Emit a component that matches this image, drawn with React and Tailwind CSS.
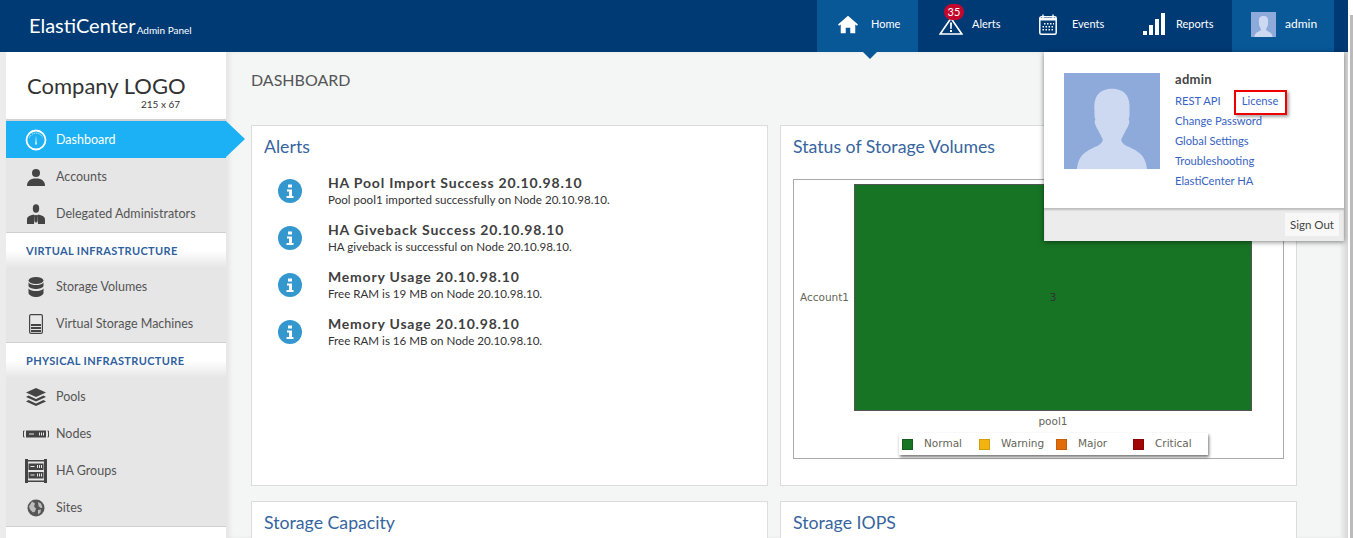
import React from 'react';

const FONT = "font-['Lato','Noto_Sans',sans-serif]";

function DashIcon() {
  return (
    <svg width="22" height="22" viewBox="0 0 22 22" fill="none">
      <circle cx="11" cy="11" r="9.5" stroke="#fff" strokeWidth="1.8" />
      <path d="M4.5 8.5a7 7 0 0 1 13 0" stroke="#fff" strokeWidth="1" strokeDasharray="1 1" />
      <path d="M11 6.5l.8 9h-1.6z" fill="#fff" />
    </svg>
  );
}

function UserIcon() {
  return (
    <svg width="20" height="18" viewBox="0 0 20 18" fill="#444">
      <circle cx="10" cy="5" r="4" />
      <path d="M1 18c0-5 3-7.500 9-7.500s9 2.500 9 7.500z" />
    </svg>
  );
}

function SuitIcon() {
  return (
    <svg width="18" height="20" viewBox="0 0 18 20" fill="#444">
      <ellipse cx="9" cy="4.500" rx="3.200" ry="4.200" />
      <path d="M0 20v-4.500c0-3 3-4 6.500-5l1.500 1-1 8.500zM18 20v-4.500c0-3-3-4-6.500-5l-1.500 1 1 8.500z" />
      <path d="M8.200 11h1.600l.7 6-1.500 2-1.500-2z" />
    </svg>
  );
}

function DbIcon() {
  return (
    <svg width="16" height="20" viewBox="0 0 16 20" fill="#444">
      <ellipse cx="8" cy="3.500" rx="7.500" ry="3.500" />
      <path d="M.5 5.500C2 7.500 5 8 8 8s6-.5 7.500-2.500V9C15 11 11 12 8 12S1 11 .5 9z" />
      <path d="M.5 11.500C2 13.500 5 14 8 14s6-.5 7.500-2.500V16c-.5 2.500-4.500 4-7.500 4S1 18.500.5 16z" />
    </svg>
  );
}

function VsmIcon() {
  return (
    <svg width="14" height="20" viewBox="0 0 14 20">
      <rect x=".6" y=".6" width="12.800" height="18.800" rx="1.500" fill="#e8e8e8" stroke="#444" strokeWidth="1.200" />
      <path d="M2 10h10v2H2zM2 13h10v2H2zM2 16h10v2H2z" fill="#444" />
    </svg>
  );
}

function LayersIcon() {
  return (
    <svg width="22" height="18" viewBox="0 0 22 18" fill="#444">
      <path d="M11 0l10 4.500-10 4.500L1 4.500z" />
      <path d="M3.500 7.500L11 11l7.500-3.500L21 9l-10 4.500L1 9z" />
      <path d="M3.500 12L11 15.500 18.500 12 21 13.500 11 18 1 13.500z" />
    </svg>
  );
}

function NodeIcon() {
  return (
    <svg width="26" height="8" viewBox="0 0 26 8">
      <path d="M1.500 1H.5v6h1M24.500 1h1v6h-1" fill="none" stroke="#444" />
      <rect x="3" y="0.500" width="20" height="7" fill="#444" />
      <path d="M6 3.500h5v1H6zM16 2.500h1v3h-1zM18 2.500h1v3h-1zM20 2.500h1v3h-1z" fill="#e8e8e8" />
    </svg>
  );
}

function RackIcon() {
  return (
    <svg width="22" height="24" viewBox="0 0 22 24">
      <path d="M0 0h3v24H0zM19 0h3v24h-3z" fill="#444" />
      <path d="M3 1h16v1.500H3zM3 21.500h16V23H3z" fill="#444" />
      <rect x="3.500" y="4.500" width="15" height="6.500" fill="#444" />
      <rect x="3.500" y="13" width="15" height="6.500" fill="#444" />
      <path d="M5.500 7h4v1h-4zM12 6h1v3h-1zM14 6h1v3h-1zM16 6h1v3h-1zM5.500 15.500h4v1h-4zM12 14.500h1v3h-1zM14 14.500h1v3h-1zM16 14.500h1v3h-1z" fill="#e8e8e8" />
    </svg>
  );
}

function GlobeIcon() {
  return (
    <svg width="18" height="18" viewBox="0 0 18 18">
      <circle cx="9" cy="9" r="8.500" fill="#555" />
      <path d="M5 2.500l3 2-1 3 2 2-1 3-2 1-3-3-1-3zM11 3l3 1.500 1.500 4-2 .5-2-2zM11 11l3-.5-.5 3-2.500 2z" fill="#bdbdbd" />
    </svg>
  );
}

function HomeIcon() {
  return (
    <svg width="20" height="19" viewBox="0 0 22 19" fill="#fff">
      <path d="M11 0L0 9.500l1.300 1.500L3 9.600V19h5.500v-6h5v6H19V9.600l1.700 1.400L22 9.500z" />
    </svg>
  );
}

function AlertIcon() {
  return (
    <svg width="24" height="18" viewBox="0 0 24 18" fill="none" className="mt-[3px]">
      <path d="M12 1.200L1.200 17h21.600z" stroke="#fff" strokeWidth="1.600" />
      <path d="M11 5.500h2l-.3 6.500h-1.400zM11 13h2v2h-2z" fill="#fff" />
    </svg>
  );
}

function CalendarIcon() {
  return (
    <svg width="18" height="21" viewBox="0 0 18 21" fill="none">
      <rect x=".8" y="2.800" width="16.400" height="17.400" rx="1.500" stroke="#fff" strokeWidth="1.500" />
      <path d="M4 0.500v4M14 0.500v4" stroke="#fff" strokeWidth="1.400" />
      <path d="M1 4h16v2.500H1z" fill="#fff" />
      <path d="M5 9h1.500v1.500H5zM8 9h1.500v1.500H8zM11 9h1.500v1.500H11zM14 9h1v1.500h-1zM3.500 12H5v1.500H3.500zM6.500 12H8v1.500H6.500zM9.500 12H11v1.500H9.500zM12.500 12H14v1.500h-1.500zM3.500 15H5v1.500H3.500zM6.500 15H8v1.500H6.500zM9.500 15H11v1.500H9.500zM12.500 15H14v1.500h-1.500z" fill="#fff" />
    </svg>
  );
}

function BarsIcon() {
  return (
    <svg width="22" height="22" viewBox="0 0 22 22" fill="#fff">
      <rect x="0" y="18" width="4" height="4" />
      <rect x="6" y="12" width="4" height="10" />
      <rect x="12" y="6" width="4" height="16" />
      <rect x="18" y="0" width="4" height="22" />
    </svg>
  );
}

function Avatar({ size }) {
  return (
    <svg width={size} height={size} viewBox="0 0 104 104" className="shrink-0 block">
      <rect width="104" height="104" fill="#8eaadb" />
      <path d="M52 17c-15 0-20 10-19 23 0 5 0 8 1 10l-1 3c1 3 2 6 4 9 2 4 4 8 5 10 0 3-3 6-8 8-10 5-18 8-20 24h76c-2-16-10-19-20-24-5-2-8-5-8-8 1-2 3-6 5-10 2-3 3-6 4-9l-1-3c1-2 1-5 1-10 1-13-4-23-19-23z" fill="#ccd9f0" />
    </svg>
  );
}

function InfoDot() {
  return (
    <svg width="24" height="24" viewBox="0 0 24 24" className="shrink-0">
      <circle cx="12" cy="12" r="12" fill="#3498cf" />
      <path d="M10 5.500h4v3h-4zM9 10.500h5v6.500h1.500v2h-7v-2H11v-4.500H9z" fill="#fff" />
    </svg>
  );
}

function NavTab({ icon, label, active, badge, className, textClass }) {
  return (
    <div className={`relative h-[52px] pb-[4px] flex items-center ${className} ${active ? 'bg-[#085797]' : ''}`}>
      {icon}
      <span className={`text-[11px] text-white ${textClass}`}>{label}</span>
      {badge && (
        <span className="absolute left-[26px] top-[4px] w-[20px] h-[16px] rounded-full bg-[#c4062c] text-white text-[11px] leading-[16px] text-center">
          {badge}
        </span>
      )}
      {active && (
        <span className="absolute left-[45px] top-[51px] w-0 h-0 border-x-[8px] border-x-transparent border-t-[8px] border-t-[#085797] z-10" />
      )}
    </div>
  );
}

function Header() {
  return (
    <header className="h-[52px] w-[1348px] shrink-0 bg-[#003a75] flex items-center">
      <div className="pl-[29px] pb-[2px] flex items-end text-white">
        <span className="text-[20px] leading-[24px]">ElastiCenter</span>
        <span className="text-[10px] leading-[14px] ml-px">Admin Panel</span>
      </div>
      <nav className="ml-auto flex items-center mr-[14px]">
        <NavTab active icon={<HomeIcon />} label="Home" className="w-[101px] pl-[21px]" textClass="ml-[13px]" />
        <NavTab icon={<AlertIcon />} label="Alerts" badge="35" className="w-[101px] pl-[21px]" textClass="ml-[9px]" />
        <NavTab icon={<CalendarIcon />} label="Events" className="w-[105px] pl-[20px]" textClass="ml-[15px]" />
        <NavTab icon={<BarsIcon />} label="Reports" className="w-[108px] pl-[19px]" textClass="ml-[11px]" />
        <div className="h-[52px] w-[102px] pb-[4px] bg-[#085797] flex items-center pl-[19px]">
          <Avatar size={25} />
          <span className="text-[12px] text-white ml-[9px]">admin</span>
        </div>
      </nav>
    </header>
  );
}

function SideItem({ icon, label, active }) {
  if (active) {
    return (
      <div className="relative h-[37px] bg-[#1cb1f5] flex items-center text-white">
        <span className="w-[50px] flex justify-center pl-[14px] pr-[4px]">{icon}</span>
        <span className="text-[12.500px] mt-[2px]">{label}</span>
        <span className="absolute left-[220px] top-0 w-0 h-0 border-y-[18.500px] border-y-transparent border-l-[19px] border-l-[#1cb1f5] z-10" />
      </div>
    );
  }
  return (
    <div className="h-[37px] flex items-center text-[#555]">
      <span className="w-[50px] flex justify-center pl-[14px] pr-[4px]">{icon}</span>
      <span className="text-[12.500px] mt-[2px]">{label}</span>
    </div>
  );
}

function SideHeading({ label }) {
  return (
    <div className="h-[36px] border-t border-[#cfcfcf] bg-gradient-to-b from-white from-50% to-[#e6e6e6] flex items-center pl-[20px]">
      <span className="text-[11px] font-bold tracking-[0.35px] text-[#2f5f9e] mt-[2px]">{label}</span>
    </div>
  );
}

function Sidebar() {
  return (
    <aside className="w-[220px] ml-[6px] shrink-0 bg-[#e6e6e6]">
      <div className="h-[69px] bg-white border-b-2 border-[#d2d2d2] flex flex-col pl-[21px] pt-[21px]">
        <div className="text-[22px] leading-[26px] text-[#333]">Company LOGO</div>
        <div className="text-[10px] leading-[10px] text-[#333] pl-[114px]">215 x 67</div>
      </div>
      <SideItem active icon={<DashIcon />} label="Dashboard" />
      <SideItem icon={<UserIcon />} label="Accounts" />
      <SideItem icon={<SuitIcon />} label="Delegated Administrators" />
      <SideHeading label="VIRTUAL INFRASTRUCTURE" />
      <SideItem icon={<DbIcon />} label="Storage Volumes" />
      <SideItem icon={<VsmIcon />} label="Virtual Storage Machines" />
      <SideHeading label="PHYSICAL INFRASTRUCTURE" />
      <SideItem icon={<LayersIcon />} label="Pools" />
      <SideItem icon={<NodeIcon />} label="Nodes" />
      <SideItem icon={<RackIcon />} label="HA Groups" />
      <SideItem icon={<GlobeIcon />} label="Sites" />
      <div className="h-[20px] bg-white border-t border-[#cfcfcf]" />
    </aside>
  );
}

const alerts = [
  ['HA Pool Import Success 20.10.98.10', 'Pool pool1 imported successfully on Node 20.10.98.10.'],
  ['HA Giveback Success 20.10.98.10', 'HA giveback is successful on Node 20.10.98.10.'],
  ['Memory Usage 20.10.98.10', 'Free RAM is 19 MB on Node 20.10.98.10.'],
  ['Memory Usage 20.10.98.10', 'Free RAM is 16 MB on Node 20.10.98.10.'],
];

function Card({ title, className, children }) {
  return (
    <section className={`bg-white border border-[#dcdcdc] ${className}`}>
      <h3 className="pl-[12px] pt-[10px] text-[17.700px] leading-[22px] text-[#37659e]">{title}</h3>
      {children}
    </section>
  );
}

function AlertsList() {
  return (
    <div className="pl-[26px] pt-[9px]">
      {alerts.map((a, i) => (
        <div key={i} className="h-[47px] flex items-center">
          <InfoDot />
          <div className="ml-[26px]">
            <div className="text-[14px] leading-[18px] font-bold tracking-[0.8px] text-[#404040]">{a[0]}</div>
            <div className="text-[11.600px] leading-[14px] mt-px text-[#333]">{a[1]}</div>
          </div>
        </div>
      ))}
    </div>
  );
}

const legend = [
  ['Normal', 'bg-[#177425]', 'border-[#125c1d]', 'w-[77px]'],
  ['Warning', 'bg-[#f2b40e]', 'border-[#d39c0a]', 'w-[77px]'],
  ['Major', 'bg-[#e06c0a]', 'border-[#c55e08]', 'w-[77px]'],
  ['Critical', 'bg-[#a30606]', 'border-[#8a0505]', 'w-[72px]'],
];

function StatusChart() {
  return (
    <div className="mx-[12px] mt-[21px] h-[280px] border border-[#aaa] flex flex-col font-['DejaVu_Sans',sans-serif] text-[10.500px] text-[#666659]">
      <div className="flex mt-[4px] h-[227px]">
        <div className="w-[60px] flex items-center justify-end pr-[5px]">Account1</div>
        <div className="w-[398px] bg-[#177425] border border-[#555] flex items-center justify-center text-[#333]">3</div>
      </div>
      <div className="pl-[60px] w-[458px] text-center mt-[4px] leading-[12px]">pool1</div>
      <div className="ml-[105px] mt-[6px] h-[22px] w-[309px] flex items-center pl-[3px] bg-white shadow-[1px_2px_3px_rgba(0,0,0,0.55)]">
        {legend.map((l) => (
          <div key={l[0]} className={`flex items-center ${l[3]}`}>
            <span className={`w-[11px] h-[11px] border ${l[1]} ${l[2]}`} />
            <span className="ml-[11px]">{l[0]}</span>
          </div>
        ))}
      </div>
    </div>
  );
}

function UserMenu() {
  return (
    <div className="absolute left-[1044px] top-[52px] w-[300px] h-[189px] bg-white shadow-[0_1px_5px_rgba(0,0,0,0.5)] z-20 flex flex-col">
      <div className="h-[156px] flex pl-[20px] pt-[21px]">
        <Avatar size={96} />
        <div className="ml-[15px] text-[11.200px] text-[#3763c4] leading-[20px]">
          <div className="text-[13px] font-bold text-[#444] leading-[16px] mt-[-2px] mb-[4px] tracking-[0.3px]">admin</div>
          <div className="flex">
            <span>REST API</span>
            <span className="relative ml-[21px]">
              License
              <span className="absolute left-[-8px] top-[-1px] w-[53px] h-[25px] border-2 border-[#ee0000] shadow-[2px_2px_3px_rgba(0,0,0,0.35)]" />
            </span>
          </div>
          <div>Change Password</div>
          <div>Global Settings</div>
          <div>Troubleshooting</div>
          <div>ElastiCenter HA</div>
        </div>
      </div>
      <div className="flex-1 bg-[#ececec] shadow-[inset_0_2px_2px_rgba(0,0,0,0.2)] flex justify-end items-center pr-[5px]">
        <span className="h-[23px] px-[5px] bg-[#f8f8f8] text-[11.500px] leading-[23px] text-[#444]">Sign Out</span>
      </div>
    </div>
  );
}

export default function App() {
  return (
    <div className={`relative w-[1353px] h-[538px] overflow-hidden bg-white flex flex-col ${FONT}`}>
      <Header />
      <div className="flex-1 flex min-h-0 bg-[#ececec] w-[1348px]">
        <Sidebar />
        <main className="w-[1114px] bg-[#f4f6f6] pl-[25px] shadow-[inset_4px_0_4px_rgba(0,0,0,0.06)]">
          <h1 className="pt-[17px] h-[73px] text-[16px] leading-[22px] text-[#555]">DASHBOARD</h1>
          <div className="flex gap-[12px]">
            <Card title="Alerts" className="w-[517px] h-[361px]">
              <AlertsList />
            </Card>
            <Card title="Status of Storage Volumes" className="w-[517px] h-[361px]">
              <StatusChart />
            </Card>
          </div>
          <div className="flex gap-[12px] mt-[15px]">
            <Card title="Storage Capacity" className="w-[517px] h-[80px]" />
            <Card title="Storage IOPS" className="w-[517px] h-[80px]" />
          </div>
        </main>
        <div className="w-[8px] bg-gradient-to-r from-[#f0f2f2] to-[#d6d6d6]" />
      </div>
      <div className="absolute right-0 top-[15px] w-[3px] h-[523px] bg-[#bbb]" />
      <UserMenu />
    </div>
  );
}
